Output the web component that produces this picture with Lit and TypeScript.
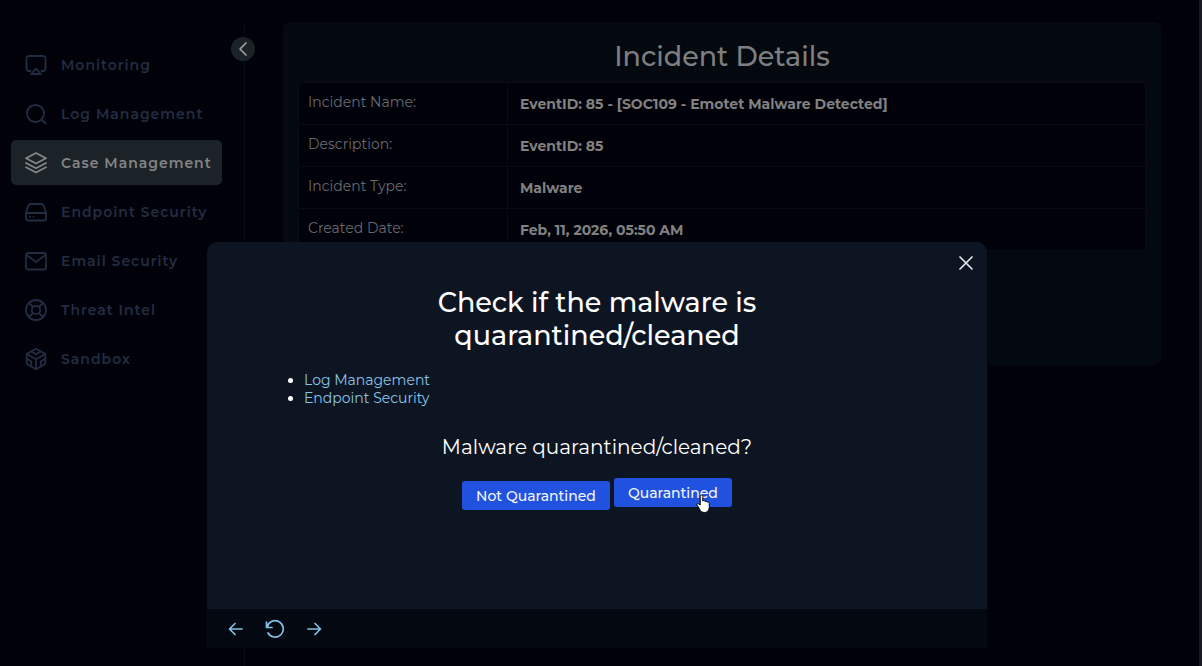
import { LitElement, html, css, svg } from "lit";
import { customElement, state } from "lit/decorators.js";

const icons = {
  monitoring: svg`<path d="M6.5 18H5a2.5 2.5 0 0 1-2.5-2.5V5.5A2.5 2.5 0 0 1 5 3h14a2.5 2.5 0 0 1 2.5 2.5v10A2.5 2.5 0 0 1 19 18h-1.500"/><path d="M12 15.500 17 21H7Z"/>`,
  search: svg`<circle cx="11.500" cy="11.500" r="8.500"/><path d="m18 18 3.500 3.500"/>`,
  layers: svg`<path d="M12 2 22 7.200 12 12.500 2 7.200Z"/><path d="m2 12 10 5.200L22 12"/><path d="m2 16.300 10 5.200 10-5.200"/>`,
  drive: svg`<path d="M2 13h20M6.500 4h11a2 2 0 0 1 1.800 1.200L22 12v6.500a2 2 0 0 1-2 2H4a2 2 0 0 1-2-2V12l2.700-6.800A2 2 0 0 1 6.500 4Z"/><path d="M6 16.700h.1M9.500 16.700h.1"/>`,
  mail: svg`<rect x="2" y="4" width="20" height="16.500" rx="2"/><path d="m2.500 6 9.500 7 9.500-7"/>`,
  buoy: svg`<circle cx="12" cy="12" r="10"/><circle cx="12" cy="12" r="4.200"/><path d="m5 5 4 4M19 5l-4 4M5 19l4-4M19 19l-4-4"/>`,
  cube: svg`<path d="M12 1.800 21.300 7v10L12 22.200 2.700 17V7Z"/><path d="M12 22V12.200L2.700 7M12 12.200 21.300 7"/><path d="m7.300 4.500 4.700 2.700 4.700-2.700"/><path d="M7.300 19.500v-5l-4.500-2.700M16.700 19.500v-5l4.500-2.700"/>`,
};

const navItems: { label: string; icon: keyof typeof icons }[] = [
  { label: "Monitoring", icon: "monitoring" },
  { label: "Log Management", icon: "search" },
  { label: "Case Management", icon: "layers" },
  { label: "Endpoint Security", icon: "drive" },
  { label: "Email Security", icon: "mail" },
  { label: "Threat Intel", icon: "buoy" },
  { label: "Sandbox", icon: "cube" },
];

const details = [
  ["Incident Name:", "EventID: 85 - [SOC109 - Emotet Malware Detected]"],
  ["Description:", "EventID: 85"],
  ["Incident Type:", "Malware"],
  ["Created Date:", "Feb, 11, 2026, 05:50 AM"],
];

@customElement("side-nav")
class SideNav extends LitElement {
  @state() active = "Case Management";

  static styles = css`
    :host {
      display: block;
      position: relative;
      flex: 0 0 244px;
      border-right: 1px solid #050d15;
      margin-top: 22px;
    }
    .list {
      display: flex;
      flex-direction: column;
      gap: 4px;
      padding: 20px 22px 0 11px;
    }
    .item {
      display: flex;
      align-items: center;
      gap: 13px;
      height: 45px;
      box-sizing: border-box;
      padding: 0 9px 0 13px;
      border-radius: 5px;
      color: #232d42;
      font-size: 14px;
      font-weight: 600;
      letter-spacing: 1px;
      white-space: nowrap;
      text-decoration: none;
    }
    .item.active {
      background: #1b2329;
      color: #858585;
    }
    .icon {
      width: 24px;
      height: 24px;
      flex: none;
      fill: none;
      stroke: currentColor;
      stroke-width: 1.8;
      stroke-linecap: round;
      stroke-linejoin: round;
    }
    .toggle {
      position: absolute;
      top: 15px;
      right: -11px;
      width: 24px;
      height: 24px;
      padding: 0;
      border: 0;
      border-radius: 50%;
      background: #1b2329;
      color: #a0a0a0;
    }
    .toggle svg {
      display: block;
      width: 24px;
      height: 24px;
      fill: none;
      stroke: currentColor;
      stroke-width: 1.7;
      stroke-linecap: round;
      stroke-linejoin: round;
    }
  `;

  render() {
    return html`
      <nav class="list">
        ${navItems.map(
          (item) => html`<a
            class="item ${item.label === this.active ? "active" : ""}"
            href="#"
            @click=${() => (this.active = item.label)}
            ><svg class="icon" viewBox="0 0 24 24">${icons[item.icon]}</svg
            ><span>${item.label}</span></a
          >`
        )}
      </nav>
      <button class="toggle" aria-label="Collapse menu">
        <svg viewBox="0 0 24 24"><path d="m15 6-6 6 6 6" /></svg>
      </button>
    `;
  }
}

@customElement("incident-card")
class IncidentCard extends LitElement {
  static styles = css`
    :host {
      display: block;
      flex: 1;
      min-width: 0;
      padding: 22px 38px;
    }
    .card {
      min-height: 343px;
      box-sizing: border-box;
      padding: 18px 15px;
      border-radius: 6px;
      background: #040910;
    }
    .title {
      margin: 0 0 8px;
      text-align: center;
      color: #7d7f81;
      font-size: 27px;
      line-height: 34px;
      font-weight: 500;
    }
    .table {
      width: 100%;
      border-collapse: collapse;
      background: #010109;
      font-size: 14px;
      line-height: 18px;
    }
    .label,
    .value {
      height: 42px;
      box-sizing: border-box;
      border: 1px solid #080a15;
      text-align: left;
      vertical-align: top;
    }
    .label {
      width: 209px;
      padding: 10px 9px;
      color: #686a70;
      font-weight: 400;
    }
    .value {
      padding: 12px 12px 10px;
      color: #818181;
      font-weight: 700;
    }
  `;

  render() {
    return html`
      <section class="card">
        <h1 class="title">Incident Details</h1>
        <table class="table">
          <tbody>
            ${details.map(
              ([label, value]) => html`<tr>
                <th class="label" scope="row">${label}</th>
                <td class="value">${value}</td>
              </tr>`
            )}
          </tbody>
        </table>
      </section>
    `;
  }
}

@customElement("playbook-dialog")
class PlaybookDialog extends LitElement {
  static styles = css`
    :host {
      position: fixed;
      inset: 0;
      display: flex;
      align-items: flex-end;
      justify-content: center;
      padding: 0 8px 18px 0;
    }
    .dialog {
      position: relative;
      width: 100%;
      max-width: 780px;
      border-radius: 10px 10px 0 0;
      background: #0e1522;
      color: #fff;
    }
    .body {
      min-height: 367px;
      box-sizing: border-box;
      padding: 44px 79px 30px;
      text-align: center;
    }
    .close {
      position: absolute;
      top: 11px;
      right: 11px;
      width: 20px;
      height: 20px;
      padding: 0;
      border: 0;
      background: none;
      color: #e3e5e9;
    }
    .heading {
      margin: 0 0 19px;
      font-size: 27px;
      line-height: 33px;
      font-weight: 500;
    }
    .links {
      margin: 0 0 28px;
      padding-left: 18px;
      text-align: left;
      font-size: 14px;
      line-height: 18px;
    }
    .link {
      color: #8ac4e6;
      text-decoration: none;
    }
    .question {
      margin: 0 0 22px;
      font-size: 20px;
      line-height: 24px;
      font-weight: 400;
    }
    .actions {
      display: flex;
      justify-content: center;
      gap: 4px;
    }
    .action {
      position: relative;
      height: 29px;
      padding: 0 14px;
      border: 0;
      border-radius: 3px;
      background: #2052df;
      color: #f4f6fd;
      font: inherit;
      font-size: 14px;
      font-weight: 500;
    }
    .action.lifted {
      transform: translateY(-3px);
    }
    .cursor {
      position: absolute;
      right: 21px;
      bottom: -7px;
      width: 16px;
      height: 21px;
    }
    .footer {
      display: flex;
      align-items: center;
      gap: 15px;
      height: 39px;
      padding: 0 17px;
      background: #030811;
    }
    .step {
      width: 24px;
      height: 24px;
      padding: 0;
      border: 0;
      background: none;
      color: #85c1e6;
    }
    .close svg,
    .step svg {
      display: block;
      width: 100%;
      height: 100%;
      fill: none;
      stroke: currentColor;
      stroke-width: 1.7;
      stroke-linecap: round;
      stroke-linejoin: round;
    }
  `;

  render() {
    return html`
      <div class="dialog" role="dialog" aria-labelledby="heading">
        <button class="close" aria-label="Close">
          <svg viewBox="0 0 20 20"><path d="m4 4 12 12M16 4 4 16" /></svg>
        </button>
        <div class="body">
          <h2 class="heading" id="heading">Check if the malware is<br />quarantined/cleaned</h2>
          <ul class="links">
            <li><a class="link" href="#">Log Management</a></li>
            <li><a class="link" href="#">Endpoint Security</a></li>
          </ul>
          <h3 class="question">Malware quarantined/cleaned?</h3>
          <div class="actions">
            <button class="action">Not Quarantined</button>
            <button class="action lifted">
              Quarantined
              <svg class="cursor" viewBox="0 0 16 21" aria-hidden="true">
                <path
                  d="M5.200 12V3.300a1.300 1.300 0 0 1 2.600 0V8c.8-.7 2-.4 2.300.4.900-.5 1.900-.1 2.200.7 1-.3 2 .3 2 1.400v3c0 3.400-1.700 6-4.800 6-2.500 0-3.700-1.200-4.900-3.300l-2.500-4c-.6-1.200.8-2.100 1.700-1.300Z"
                  fill="#fff"
                  stroke="#000"
                  stroke-width="1"
                />
              </svg>
            </button>
          </div>
        </div>
        <div class="footer">
          <button class="step" aria-label="Previous">
            <svg viewBox="0 0 24 24"><path d="M18 12H6M11 6.500 5.500 12l5.500 5.500" /></svg>
          </button>
          <button class="step" aria-label="Restart">
            <svg viewBox="0 0 24 24"><path d="M3.500 5v5.500H9M4 10.500A8.200 8.200 0 1 1 5 16" /></svg>
          </button>
          <button class="step" aria-label="Next">
            <svg viewBox="0 0 24 24"><path d="M6 12h12M13 6.500l5.500 5.500-5.500 5.500" /></svg>
          </button>
        </div>
      </div>
    `;
  }
}

@customElement("app-root")
class AppRoot extends LitElement {
  static styles = css`
    :host {
      display: flex;
      min-height: 100vh;
      box-sizing: border-box;
      border-right: 3px solid #191923;
      background: #010109;
      font-family: Montserrat, Inter, "Open Sans", sans-serif;
    }
  `;

  render() {
    return html`
      <side-nav></side-nav>
      <incident-card></incident-card>
      <playbook-dialog></playbook-dialog>
    `;
  }
}
